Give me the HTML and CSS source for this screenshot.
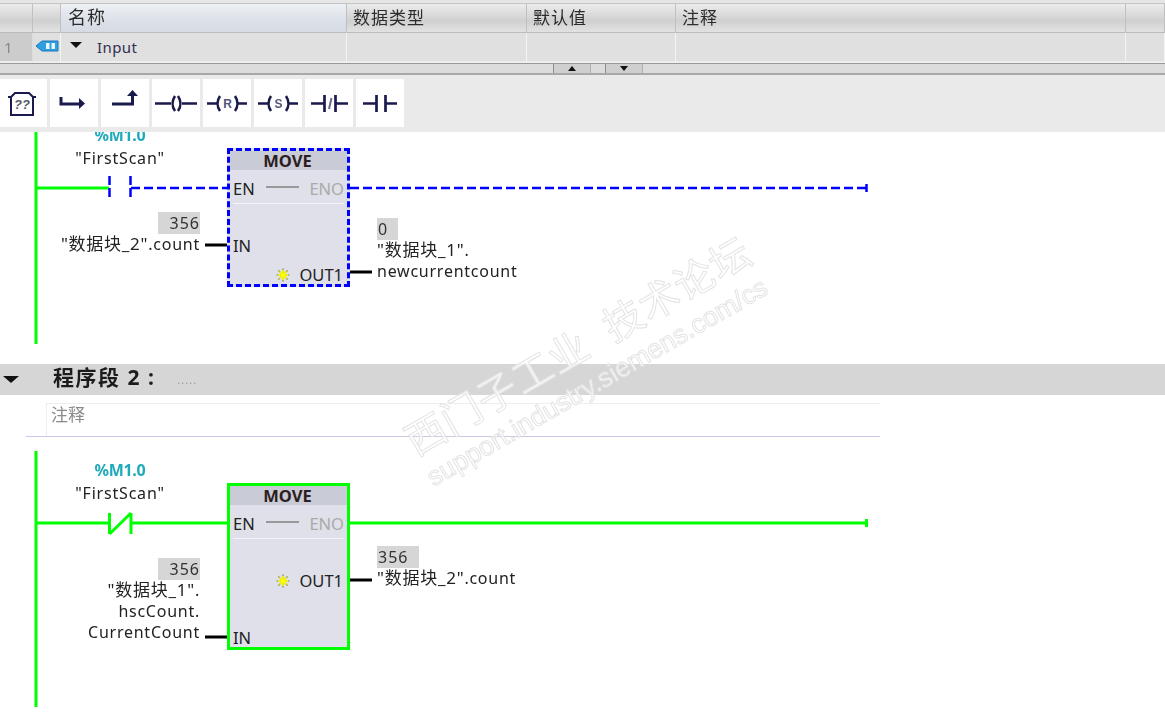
FILE: index.html
```html
<!DOCTYPE html>
<html lang="zh">
    <head>
        <meta charset="UTF-8" />
        <title>程序段</title>
        <link rel="stylesheet" href="styles.css">
    </head>
    <body>
        <div class="app">
            <!-- interface table -->
            <div class="table-top"></div>
            <div class="table-row table-head">
                <div class="cell"></div>
                <div class="cell"></div>
                <div class="cell cell-name">名称</div>
                <div class="cell">数据类型</div>
                <div class="cell">默认值</div>
                <div class="cell">注释</div>
                <div class="cell"></div>
            </div>
            <div class="table-row table-body">
                <div class="cell cell-num">1</div>
                <div class="cell cell-icon">
                    <svg width="24" height="14" viewBox="0 0 24 14">
                        <path d="M1 7 L7 2 H23 V12 H7 Z" fill="#2f9fe0" stroke="#1c78c0" />
                        <rect x="11" y="4" width="9" height="6" fill="#eaf6ff" />
                        <rect x="14.500" y="4" width="2" height="6" fill="#2f9fe0" />
                    </svg>
                </div>
                <div class="cell cell-input"><span class="tri-down"></span>Input</div>
                <div class="cell"></div>
                <div class="cell"></div>
                <div class="cell"></div>
                <div class="cell"></div>
            </div>
            <div class="splitter">
                <div class="split-btn"><span class="tri-up-small"></span></div>
                <div class="split-btn"><span class="tri-down-small"></span></div>
            </div>

            <!-- LAD instruction favorites -->
            <div class="toolbar">
                <div class="tool">
                    <svg width="48" height="48" viewBox="0 0 48 48">
                        <path d="M12 18 L16 14 H30 L34 18 V36 H12 Z M9 18 H12 M34 18 H37" class="ico" stroke-width="2" />
                        <text x="23" y="30" class="ico-text">??</text>
                    </svg>
                </div>
                <div class="tool">
                    <svg width="48" height="48" viewBox="0 0 48 48">
                        <path d="M11 18 V25 H30" class="ico" stroke-width="3" />
                        <path d="M29 19 L35 24.500 L29 30 Z" class="ico-fill" />
                    </svg>
                </div>
                <div class="tool">
                    <svg width="48" height="48" viewBox="0 0 48 48">
                        <path d="M11 25 H31.500 V16" class="ico" stroke-width="3" />
                        <path d="M26 17 L31.500 11 L37 17 Z" class="ico-fill" />
                    </svg>
                </div>
                <div class="tool">
                    <svg width="48" height="48" viewBox="0 0 48 48">
                        <path d="M3 24.500 H19 M30 24.500 H45" class="ico" stroke-width="2.500" />
                        <path d="M23 17 Q18 24.500 23 32 M26 17 Q31 24.500 26 32" class="ico" stroke-width="2.500" />
                    </svg>
                </div>
                <div class="tool">
                    <svg width="48" height="48" viewBox="0 0 48 48">
                        <path d="M4 24.500 H14 M35 24.500 H44" class="ico" stroke-width="2.500" />
                        <path d="M17 17 Q12 24.500 17 32 M32 17 Q37 24.500 32 32" class="ico" stroke-width="2.500" />
                        <text x="24.500" y="29" class="ico-letter">R</text>
                    </svg>
                </div>
                <div class="tool">
                    <svg width="48" height="48" viewBox="0 0 48 48">
                        <path d="M4 24.500 H14 M35 24.500 H44" class="ico" stroke-width="2.500" />
                        <path d="M17 17 Q12 24.500 17 32 M32 17 Q37 24.500 32 32" class="ico" stroke-width="2.500" />
                        <text x="24.500" y="29" class="ico-letter">S</text>
                    </svg>
                </div>
                <div class="tool">
                    <svg width="48" height="48" viewBox="0 0 48 48">
                        <path d="M6 24.500 H19 M19.500 16 V33 M30.500 16 V33 M30 24.500 H43" class="ico" stroke-width="2.700" />
                        <path d="M24 30 L26.500 19" class="ico-soft" stroke-width="2" />
                    </svg>
                </div>
                <div class="tool">
                    <svg width="48" height="48" viewBox="0 0 48 48">
                        <path d="M7 24.500 H20 M20.500 16 V33 M29.500 16 V33 M29 24.500 H41" class="ico" stroke-width="2.700" />
                    </svg>
                </div>
            </div>

            <!-- network 1 (top part scrolled under the toolbar) -->
            <div class="network network-1">
                <svg class="wires" width="1165" height="232">
                    <path d="M36 0 V212" class="w-green" />
                    <path d="M36 56 H109" class="w-green" />
                    <path d="M109.500 44 V66 M130.500 44 V66" class="w-blue" />
                    <path d="M131 56 H227 M350 56 H866" class="w-blue-dash" />
                    <path d="M866.500 52 V60" class="w-blue" />
                    <path d="M205 113 H227 M350 140 H372" class="w-black" />
                </svg>

                <div class="contact-label">
                    <div class="address">%M1.0</div>
                    <div class="tag">"FirstScan"</div>
                </div>

                <div class="block block-online">
                    <div class="block-title">MOVE</div>
                    <div class="en-row"><span>EN</span><span class="en-line"></span><span class="eno">ENO</span></div>
                    <div class="pin-row pin-in-1">IN</div>
                    <div class="pin-row pin-right pin-out-1">
                        <svg class="star" width="14" height="14" viewBox="0 0 14 14">
                            <path d="M7 0.500 V13.500 M0.500 7 H13.500 M2.500 2.500 L11.500 11.500 M11.500 2.500 L2.500 11.500" stroke="#8a8a30" stroke-width="1.200" />
                            <path d="M7 2 V12 M2 7 H12 M3.500 3.500 L10.500 10.500 M10.500 3.500 L3.500 10.500" stroke="#ffff00" stroke-width="1.500" />
                        </svg>
                        OUT1
                    </div>
                </div>

                <div class="operand operand-left op-1-in">
                    <div class="value">356</div>
                    <div class="line"><span class="cn">"数据块_2"</span>.count</div>
                </div>
                <div class="operand operand-right op-1-out">
                    <div class="value value-short">0</div>
                    <div class="line"><span class="cn">"数据块_1"</span>.</div>
                    <div class="line">newcurrentcount</div>
                </div>
            </div>

            <div class="network-head">
                <span class="tri-head"></span>
                <span class="network-title">程序段 2 :</span>
                <span class="network-dots">.....</span>
            </div>
            <div class="comment-wrap">
                <div class="comment">注释</div>
            </div>

            <!-- network 2 -->
            <div class="network network-2">
                <svg class="wires" width="1165" height="287">
                    <path d="M36 14 V270" class="w-green" />
                    <path d="M36 86 H109 M131 86 H227 M350 86 H866" class="w-green" />
                    <path d="M109.500 76 V97 M131 76 V97 M109.500 97 L131 76" class="w-green" />
                    <path d="M866.500 82 V90" class="w-green" />
                    <path d="M205 200 H227 M350 143 H372" class="w-black" />
                </svg>

                <div class="contact-label contact-label-2">
                    <div class="address">%M1.0</div>
                    <div class="tag">"FirstScan"</div>
                </div>

                <div class="block block-ok">
                    <div class="block-title">MOVE</div>
                    <div class="en-row"><span>EN</span><span class="en-line"></span><span class="eno">ENO</span></div>
                    <div class="pin-row pin-right pin-out-2">
                        <svg class="star" width="14" height="14" viewBox="0 0 14 14">
                            <path d="M7 0.500 V13.500 M0.500 7 H13.500 M2.500 2.500 L11.500 11.500 M11.500 2.500 L2.500 11.500" stroke="#8a8a30" stroke-width="1.200" />
                            <path d="M7 2 V12 M2 7 H12 M3.500 3.500 L10.500 10.500 M10.500 3.500 L3.500 10.500" stroke="#ffff00" stroke-width="1.500" />
                        </svg>
                        OUT1
                    </div>
                    <div class="pin-row pin-in-2">IN</div>
                </div>

                <div class="operand operand-left op-2-in">
                    <div class="value">356</div>
                    <div class="line"><span class="cn">"数据块_1"</span>.</div>
                    <div class="line">hscCount.</div>
                    <div class="line">CurrentCount</div>
                </div>
                <div class="operand operand-right op-2-out">
                    <div class="value">356</div>
                    <div class="line"><span class="cn">"数据块_2"</span>.count</div>
                </div>
            </div>

            <div class="watermark">
                <div class="wm-cn">西门子工业&nbsp; 技术论坛</div>
                <div class="wm-en">support.industry.siemens.com/cs</div>
            </div>
        </div>
    </body>
</html>
```

FILE: styles.css
```css
:root {
    --green: #00ff00;
    --blue: #0000ff;
    --ink: #1a1a4c;
    --block-bg: #dfe0e9;
    --title-bg: #c9cbd7;
    --value-bg: #d6d6d6;
}

html, body {
    margin: 0;
    padding: 0;
    background: #fff;
}

body {
    font-family: "Noto Sans", "Noto Sans CJK SC", sans-serif;
    color: #222;
    overflow: hidden;
}

.app {
    position: relative;
    width: 1165px;
    height: 724px;
    overflow: hidden;
    filter: blur(0.35px);
}

/* table */
.table-top {
    height: 3px;
    background: #e6e6e6;
    border-bottom: 1px solid #c4c4c4;
}

.table-row {
    display: grid;
    grid-template-columns: 33px 28px 286px 180px 149px 450px 39px;
}

.table-head {
    height: 28px;
    border-bottom: 1px solid #bcbcbc;
}

.table-head .cell {
    background: linear-gradient(#ececec, #d0d0d0 60%, #e2e2e2);
    border-right: 1px solid #c0c0c0;
    font-size: 17px;
    line-height: 27px;
    padding-left: 6px;
    letter-spacing: 1px;
    color: #2c2c2c;
}

.table-head .cell-name {
    background: linear-gradient(#edf0f4, #dce0e8 60%, #d6dbe4);
    font-size: 18px;
    padding-left: 7px;
}

.table-body {
    height: 29px;
}

.table-body .cell {
    background: #e0e0e0;
    border-right: 1px solid #f4f4f4;
    border-bottom: 2px solid #eeeeee;
    box-sizing: border-box;
}

.cell {
    min-width: 0;
}

.table-head .cell {
    box-sizing: border-box;
}

.table-body .cell-num {
    background: #cccccc;
    border-right: 1px solid #dddddd;
    color: #888;
    font-size: 15px;
    line-height: 28px;
    padding-left: 4px;
}

.table-body .cell-icon {
    display: flex;
    align-items: center;
    padding-left: 2px;
    padding-bottom: 2px;
}

.table-body .cell-input {
    display: flex;
    align-items: center;
    font-size: 15px;
    padding-left: 9px;
    padding-bottom: 1px;
    color: #33304f;
    letter-spacing: 0.4px;
}

.tri-down {
    width: 0;
    height: 0;
    border-left: 6px solid transparent;
    border-right: 6px solid transparent;
    border-top: 6px solid #111;
    margin-right: 15px;
    margin-bottom: 4px;
}

.splitter {
    height: 9px;
    background: #dcdcdc;
    border-top: 2px solid #9a9a9a;
    border-bottom: 2px solid #a8a8a8;
    display: flex;
    justify-content: center;
    gap: 14px;
    padding-left: 31px;
}

.split-btn {
    width: 36px;
    height: 9px;
    background: #cfcfcf;
    border-left: 1px solid #8e8e8e;
    border-right: 1px solid #b0b0b0;
    display: flex;
    align-items: center;
    justify-content: center;
}

.tri-up-small {
    width: 0;
    height: 0;
    border-left: 4px solid transparent;
    border-right: 4px solid transparent;
    border-bottom: 5px solid #111;
}

.tri-down-small {
    width: 0;
    height: 0;
    border-left: 4px solid transparent;
    border-right: 4px solid transparent;
    border-top: 5px solid #111;
}

/* toolbar */
.toolbar {
    height: 57px;
    box-sizing: border-box;
    padding-top: 4px;
    background: #eaeaea;
    display: flex;
    gap: 3px;
    position: relative;
    z-index: 2;
}

.tool {
    width: 48px;
    height: 48px;
    background: #fff;
}

.tool:first-child {
    margin-left: -1px;
}

.ico {
    fill: none;
    stroke: var(--ink);
}

.ico-soft {
    fill: none;
    stroke: #6a6a8c;
}

.ico-fill {
    fill: var(--ink);
}

.ico-text {
    font-family: "Liberation Sans", sans-serif;
    font-size: 13px;
    font-weight: bold;
    font-style: italic;
    fill: #5a5a6c;
    text-anchor: middle;
}

.ico-letter {
    font-family: "Liberation Sans", sans-serif;
    font-size: 12px;
    font-weight: bold;
    fill: #55557a;
    text-anchor: middle;
}

/* networks: free canvas, items sit where the LAD editor draws them */
.network {
    position: relative;
    overflow: hidden;
}

.network-1 {
    height: 232px;
}

.network-2 {
    height: 287px;
}

.wires {
    position: absolute;
    left: 0;
    top: 0;
}

.wires path {
    fill: none;
}

.w-green {
    stroke: var(--green);
    stroke-width: 3;
}

.w-blue {
    stroke: var(--blue);
    stroke-width: 2.500;
    stroke-dasharray: 9 3;
}

.w-blue-dash {
    stroke: var(--blue);
    stroke-width: 2.500;
    stroke-dasharray: 9 4;
}

.w-black {
    stroke: #000;
    stroke-width: 3;
}

.contact-label {
    position: absolute;
    left: 60px;
    width: 120px;
    top: -8px;
    text-align: center;
}

.contact-label-2 {
    top: 22px;
}

.address {
    font-size: 16px;
    font-weight: bold;
    color: #1faabb;
    line-height: 23px;
    letter-spacing: -0.3px;
}

.tag {
    font-size: 16px;
    line-height: 22px;
    letter-spacing: 0.8px;
}

.block {
    position: absolute;
    left: 227px;
    width: 123px;
    box-sizing: border-box;
    background: var(--block-bg);
    font-size: 16.500px;
}

.block-online {
    top: 16px;
    height: 139px;
    border: 3px dashed var(--blue);
}

.block-ok {
    top: 46px;
    height: 167px;
    border: 3px solid var(--green);
}

.block-title {
    height: 19px;
    line-height: 19px;
    background: var(--title-bg);
    text-align: center;
    font-weight: bold;
    font-size: 16.500px;
    color: #2c2020;
    padding-right: 2px;
}

.en-row {
    height: 33px;
    line-height: 37px;
    margin: 0 3px;
    display: flex;
    justify-content: space-between;
    border-bottom: 1px solid #f4f4f8;
}

.en-line {
    width: 33px;
    height: 2px;
    margin-top: 16px;
    background: #999;
}

.eno {
    color: #aaa;
}

.pin-row {
    height: 20px;
    line-height: 20px;
    padding: 0 3px;
}

.pin-right {
    display: flex;
    justify-content: flex-end;
    align-items: center;
    gap: 9px;
    padding-right: 4px;
}

.pin-in-1 {
    margin-top: 32px;
}

.pin-out-1 {
    margin-top: 9px;
}

.pin-out-2 {
    margin-top: 32px;
}

.pin-in-2 {
    margin-top: 37px;
}

.star {
    flex: none;
}

.operand {
    position: absolute;
    display: flex;
    flex-direction: column;
    font-size: 16px;
    letter-spacing: 0.75px;
}

.operand-left {
    align-items: flex-end;
    right: 965px;
    text-align: right;
}

.operand-right {
    left: 377px;
    align-items: flex-start;
}

.op-1-in {
    top: 80px;
}

.op-1-out {
    top: 86px;
}

.op-2-in {
    top: 121px;
}

.op-2-out {
    top: 109px;
}

.value {
    width: 42px;
    height: 22px;
    line-height: 23px;
    box-sizing: border-box;
    padding: 0;
    background: var(--value-bg);
    font-size: 16px;
    text-align: right;
    letter-spacing: 1px;
    color: #333;
}

.operand-right .value {
    text-align: left;
    padding-left: 1px;
}

.value-short {
    width: 21px;
}

.line {
    height: 21px;
    line-height: 20px;
    white-space: nowrap;
}

.cn {
    font-size: 17px;
}

/* section header */
.network-head {
    height: 31px;
    background: #d6d6d6;
    display: flex;
    align-items: center;
    position: relative;
}

.tri-head {
    width: 0;
    height: 0;
    border-left: 8px solid transparent;
    border-right: 8px solid transparent;
    border-top: 7px solid #111;
    margin-left: 3px;
}

.network-title {
    margin-left: 34px;
    margin-bottom: 8px;
    font-size: 21px;
    font-weight: bold;
    letter-spacing: 1.500px;
    color: #1c1c1c;
}

.network-dots {
    margin-left: 22px;
    font-size: 11px;
    color: #999;
    letter-spacing: 1px;
}

.comment-wrap {
    height: 42px;
    box-sizing: border-box;
    width: 880px;
    padding: 8px 0 0 46px;
    margin-left: 0;
    position: relative;
}

.comment-wrap::after {
    content: "";
    position: absolute;
    left: 26px;
    right: 0;
    bottom: 0;
    height: 1px;
    background: #c9c9ea;
}

.comment {
    height: 33px;
    box-sizing: border-box;
    border-top: 1px solid #eeeeee;
    border-left: 1px solid #eeeeee;
    padding-left: 4px;
    font-size: 17px;
    line-height: 22px;
    color: #8a8a8a;
}

/* forum watermark over everything */
.watermark {
    position: absolute;
    left: 396px;
    top: 422px;
    transform-origin: 0 0;
    transform: rotate(-30deg);
    color: rgba(255, 255, 255, 0.7);
    -webkit-text-stroke: 1px #e4e4e4;
    z-index: 3;
    white-space: nowrap;
    pointer-events: none;
}

.wm-cn {
    font-size: 40px;
    line-height: 50px;
    letter-spacing: 1px;
}

.wm-en {
    font-family: "Liberation Sans", sans-serif;
    font-size: 26.800px;
    line-height: 32px;
}
```
